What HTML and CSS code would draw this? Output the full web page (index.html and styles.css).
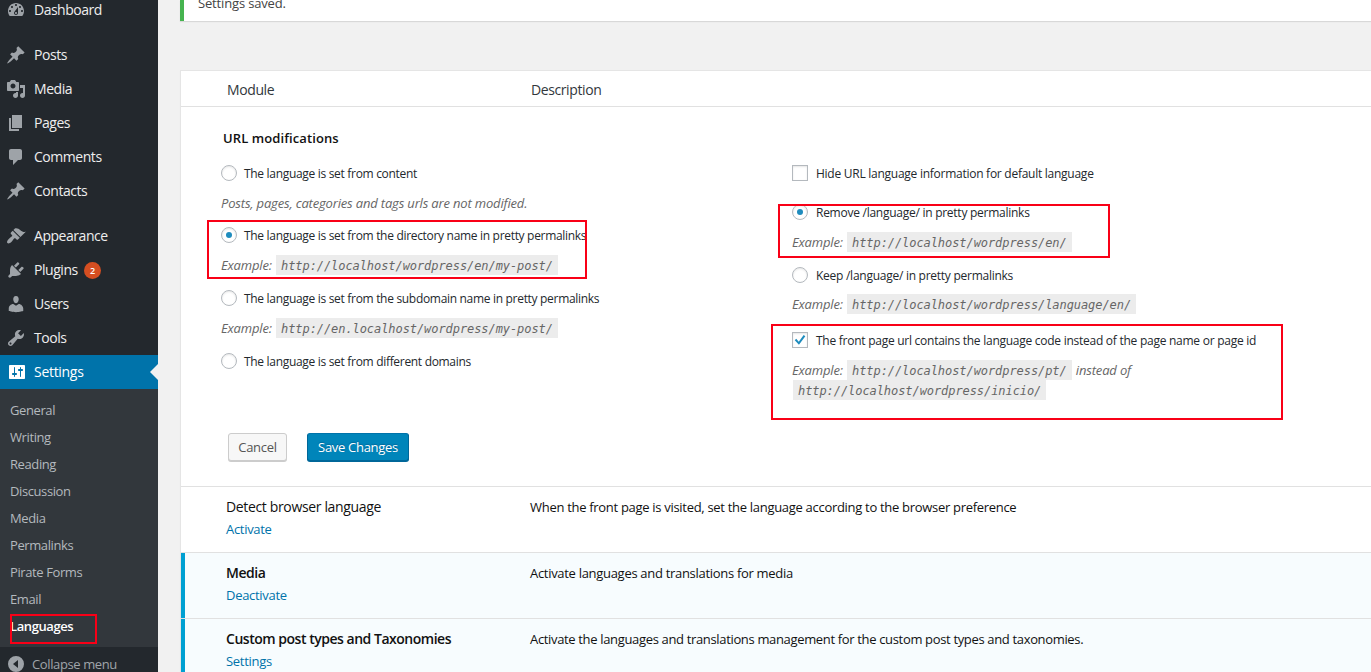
FILE: index.html
```html
<!DOCTYPE html>
<html lang="en">
<head>
<meta charset="utf-8">
<title>Languages settings</title>
<link rel="stylesheet" href="styles.css">
</head>
<body>
<div class="admin">
  <nav class="sidebar">
    <a class="item"><svg class="icon" viewBox="0 0 20 20"><path d="M3.760 16h12.480c1.100-1.370 1.760-3.110 1.760-5 0-4.420-3.580-8-8-8s-8 3.580-8 8c0 1.890.66 3.630 1.760 5zM10 4c.55 0 1 .45 1 1s-.45 1-1 1-1-.45-1-1 .45-1 1-1zM6 6c.55 0 1 .45 1 1s-.45 1-1 1-1-.45-1-1 .45-1 1-1zm8 0c.55 0 1 .45 1 1s-.45 1-1 1-1-.45-1-1 .45-1 1-1zm-5.370 5.550L12 7v6c0 1.100-.9 2-2 2s-2-.9-2-2c0-.57.24-1.080.63-1.450zM4 10c.55 0 1 .45 1 1s-.45 1-1 1-1-.45-1-1 .45-1 1-1zm12 0c.55 0 1 .45 1 1s-.45 1-1 1-1-.45-1-1 .45-1 1-1zm-5 3c0-.55-.45-1-1-1s-1 .45-1 1 .45 1 1 1 1-.45 1-1z" fill-rule="evenodd"/></svg><span class="wide">Dashboard</span></a>
    <a class="item gap"><svg class="icon" viewBox="0 0 20 20"><path d="M10.440 3.020l1.820-1.820 6.360 6.350-1.830 1.820c-1.050-.68-2.480-.57-3.410.36l-.75.75c-.92.93-1.040 2.350-.35 3.410l-1.830 1.820-2.410-2.410-2.800 2.790c-.42.42-3.380 2.710-3.800 2.290s1.860-3.390 2.280-3.810l2.790-2.790L4.100 9.360l1.830-1.820c1.050.69 2.480.57 3.400-.36l.75-.75c.93-.92 1.050-2.350.36-3.410z"/></svg><span>Posts</span></a>
    <a class="item"><svg class="icon" viewBox="0 0 20 20"><path fill-rule="evenodd" d="M13 11V4c0-.55-.45-1-1-1h-1.670L9 1H5L3.670 3H2c-.55 0-1 .45-1 1v7c0 .55.45 1 1 1h10c.55 0 1-.45 1-1zM7 4.500c1.380 0 2.500 1.120 2.500 2.500S8.380 9.500 7 9.500 4.500 8.380 4.500 7 5.620 4.500 7 4.500zM14 6h5v10.500c0 1.380-1.120 2.500-2.500 2.500S14 17.880 14 16.500s1.120-2.500 2.500-2.500c.17 0 .34.02.5.05V9h-3V6zm-4 8.050V13h2v3.500c0 1.380-1.120 2.500-2.500 2.500S7 17.880 7 16.500 8.120 14 9.500 14c.17 0 .34.02.5.05z"/></svg><span>Media</span></a>
    <a class="item"><svg class="icon" viewBox="0 0 20 20"><path d="M6 15V2h10v13H6zm-1 1h8v2H3V5h2v11z"/></svg><span>Pages</span></a>
    <a class="item"><svg class="icon" viewBox="0 0 20 20"><path d="M5 2h9c1.100 0 2 .9 2 2v7c0 1.100-.9 2-2 2h-2l-5 5v-5H5c-1.100 0-2-.9-2-2V4c0-1.100.9-2 2-2z"/></svg><span>Comments</span></a>
    <a class="item"><svg class="icon" viewBox="0 0 20 20"><path d="M10.440 3.020l1.820-1.820 6.360 6.350-1.830 1.820c-1.050-.68-2.480-.57-3.410.36l-.75.75c-.92.93-1.040 2.350-.35 3.410l-1.830 1.820-2.410-2.410-2.800 2.790c-.42.42-3.380 2.710-3.800 2.290s1.860-3.390 2.280-3.810l2.790-2.790L4.100 9.360l1.830-1.820c1.050.69 2.480.57 3.400-.36l.75-.75c.93-.92 1.050-2.350.36-3.410z"/></svg><span>Contacts</span></a>
    <a class="item gap"><svg class="icon" viewBox="0 0 20 20"><path d="M14.480 11.060L7.410 3.990l1.500-1.500c.5-.56 2.300-.47 3.510.32 1.210.8 1.430 1.280 2.910 2.100 1.180.64 2.450 1.260 4.450.85zm-.71.71L6.700 4.700 4.930 6.470c-.39.39-.39 1.020 0 1.410l1.060 1.060c.39.39.39 1.030 0 1.420-.6.6-1.430 1.110-2.210 1.690-.35.26-.7.53-1.010.84C1.430 14.230.4 16.080 1.400 17.070c.99 1 2.840-.03 4.180-1.360.31-.31.58-.66.85-1.020.57-.78 1.080-1.610 1.690-2.210.39-.39 1.020-.39 1.410 0l1.060 1.060c.39.39 1.020.39 1.410 0z"/></svg><span>Appearance</span></a>
    <a class="item"><svg class="icon" viewBox="0 0 20 20"><path d="M13.110 4.360L9.870 7.600 8 5.730l3.240-3.240c.35-.34 1.050-.2 1.560.32.52.51.66 1.210.31 1.550zm-8 1.770l.91-1.120 9.010 9.010-1.190.84c-.71.71-2.630 1.160-3.820 1.160H6.140L4.900 17.260c-.59.59-1.540.59-2.120 0-.59-.58-.59-1.530 0-2.120l1.240-1.240v-3.880c0-1.130.4-3.190 1.090-3.890zm7.260 3.970l3.240-3.240c.34-.35 1.040-.21 1.550.31.52.51.66 1.210.31 1.550l-3.240 3.250z"/></svg><span>Plugins</span><b class="count">2</b></a>
    <a class="item"><svg class="icon" viewBox="0 0 20 20"><path d="M10 9.250c-2.270 0-2.730-3.440-2.730-3.440C7 4.020 7.820 2 9.970 2c2.160 0 2.980 2.020 2.710 3.810 0 0-.41 3.440-2.680 3.440zm0 2.570L12.720 10c2.390 0 4.520 2.330 4.520 4.530v2.490s-3.650 1.130-7.240 1.130c-3.650 0-7.240-1.130-7.240-1.130v-2.490c0-2.250 1.940-4.480 4.470-4.480z"/></svg><span>Users</span></a>
    <a class="item"><svg class="icon" viewBox="0 0 20 20"><path fill-rule="evenodd" d="M16.680 9.770c-1.340 1.340-3.300 1.670-4.950.99l-5.410 6.520c-.99.99-2.590.99-3.580 0s-.99-2.590 0-3.570l6.520-5.420c-.68-1.650-.35-3.610.99-4.950 1.280-1.280 3.120-1.620 4.720-1.060l-2.890 2.890 2.820 2.820 2.860-2.870c.53 1.580.18 3.390-1.080 4.650zM3.810 16.210c.4.39 1.040.39 1.430 0 .4-.4.4-1.040 0-1.430-.39-.4-1.030-.4-1.430 0-.39.39-.39 1.030 0 1.430z"/></svg><span>Tools</span></a>
    <a class="item current"><svg class="icon" viewBox="0 0 20 20"><path fill-rule="evenodd" d="M18 16V4c0-.55-.45-1-1-1H3c-.55 0-1 .45-1 1v12c0 .55.45 1 1 1h14c.55 0 1-.45 1-1zM8 11h1c.55 0 1 .45 1 1s-.45 1-1 1H8v1.500c0 .28-.22.5-.5.5s-.5-.22-.5-.5V13H6c-.55 0-1-.45-1-1s.45-1 1-1h1V5.500c0-.28.22-.5.5-.5s.5.22.5.5V11zm5-2h-1c-.55 0-1-.45-1-1s.45-1 1-1h1V5.500c0-.28.22-.5.5-.5s.5.22.5.5V7h1c.55 0 1 .45 1 1s-.45 1-1 1h-1v5.500c0 .28-.22.5-.5.5s-.5-.22-.5-.5V9z"/></svg><span>Settings</span></a>
    <div class="submenu">
      <a>General</a><a>Writing</a><a>Reading</a><a>Discussion</a><a>Media</a><a>Permalinks</a><a>Pirate Forms</a><a>Email</a><a class="active">Languages</a>
    </div>
    <a class="collapse"><svg class="icon" viewBox="0 0 20 20"><path fill-rule="evenodd" d="M10 2a8 8 0 1 1 0 16 8 8 0 0 1 0-16zM12 6v8l-5-4z"/></svg><span>Collapse menu</span></a>
  </nav>

  <main class="content">
    <div class="notice">Settings saved.</div>
    <section class="table">
      <header class="head"><span>Module</span><span>Description</span></header>
      <div class="panel">
        <h4>URL modifications</h4>
        <div class="columns">
          <div class="col">
            <label class="opt"><i class="radio"></i>The language is set from content</label>
            <p class="desc posts">Posts, pages, categories and tags urls are not modified.</p>
            <label class="opt"><i class="radio on"></i>The language is set from the directory name in pretty permalinks</label>
            <p class="desc">Example: <code>http://localhost/wordpress/en/my-post/</code></p>
            <label class="opt"><i class="radio"></i>The language is set from the subdomain name in pretty permalinks</label>
            <p class="desc">Example: <code>http://en.localhost/wordpress/my-post/</code></p>
            <label class="opt"><i class="radio"></i>The language is set from different domains</label>
          </div>
          <div class="col right">
            <label class="opt hide"><i class="check"></i>Hide URL language information for default language</label>
            <label class="opt"><i class="radio on"></i>Remove /language/ in pretty permalinks</label>
            <p class="desc">Example: <code>http://localhost/wordpress/en/</code></p>
            <label class="opt"><i class="radio"></i>Keep /language/ in pretty permalinks</label>
            <p class="desc last">Example: <code>http://localhost/wordpress/language/en/</code></p>
            <label class="opt"><i class="check"><svg viewBox="0 0 16 16"><path d="M3.700 6.700l2.900 3.300 5.600-7.600 1.900 1.300-7.300 9.800L2 8.300z"/></svg></i>The front page url contains the language code instead of the page name or page id</label>
            <p class="desc">Example: <code>http://localhost/wordpress/pt/</code> instead of<br><code class="first">http://localhost/wordpress/inicio/</code></p>
          </div>
        </div>
        <div class="actions"><button class="btn">Cancel</button><button class="btn primary">Save Changes</button></div>
      </div>
      <div class="row"><div><strong>Detect browser language</strong><a>Activate</a></div><p>When the front page is visited, set the language according to the browser preference</p></div>
      <div class="row enabled"><div><strong>Media</strong><a>Deactivate</a></div><p>Activate languages and translations for media</p></div>
      <div class="row enabled"><div><strong>Custom post types and Taxonomies</strong><a>Settings</a></div><p class="long">Activate the languages and translations management for the custom post types and taxonomies.</p></div>
    </section>
  </main>
  <div class="mark mark-directory"></div>
  <div class="mark mark-remove"></div>
  <div class="mark mark-front"></div>
  <div class="mark mark-languages"></div>
</div>
</body>
</html>
```

FILE: styles.css
```css
* { box-sizing: border-box; }
body { margin: 0; background: #f1f1f1; font: 13px/20px "Open Sans", "Noto Sans", sans-serif; color: #444; }
p, h4 { margin: 0; }
.admin { position: relative; display: flex; width: 1371px; height: 672px; overflow: hidden; }

/* Sidebar */
.sidebar { flex: 0 0 158px; background: #23282d; margin-top: -7px; }
.item, .collapse { position: relative; display: flex; align-items: center; height: 34px; padding-left: 6px; gap: 8px; font-size: 14px; letter-spacing: -.46px; color: #eee; }
.item .wide { letter-spacing: -.5px; }
.gap { margin-top: 11px; }
.icon { width: 20px; height: 20px; fill: #9ea3a8; flex: none; }
.current { background: #0073aa; color: #fff; letter-spacing: -.3px; }
.current .icon { fill: #fff; margin: 0 -1px 0 1px; }
.current::after { content: ""; position: absolute; right: 0; top: 9px; border: 8px solid transparent; border-left: 0; border-right-color: #f1f1f1; }
.count { width: 17px; height: 17px; margin-left: -2px; border-radius: 50%; background: #d54e21; color: #fff; font-size: 9px; line-height: 17px; font-weight: 600; text-align: center; }
.submenu { height: 258px; padding: 8px 0 0 10px; background: #32373c; }
.submenu a { display: block; height: 27px; line-height: 27px; color: #b4b9be; letter-spacing: -.4px; }
.submenu .active { color: #fff; font-weight: 600; }
.collapse { font-size: 13px; gap: 6px; color: #a0a5aa; letter-spacing: -.38px; }

/* Content */
.content { flex: 1; padding-left: 22px; }
.notice { height: 21px; padding-left: 14px; border-left: 4px solid #46b450; background: #fff; box-shadow: 0 1px 1px rgba(0,0,0,.1); line-height: 7px; letter-spacing: -.16px; }
.table { margin-top: 49px; border: 1px solid #e5e5e5; border-right: 0; background: #fff; box-shadow: 0 1px 1px rgba(0,0,0,.04); }
.head { display: grid; grid-template-columns: 304px 1fr; height: 36px; padding-left: 46px; border-bottom: 1px solid #e1e1e1; font-size: 14px; line-height: 37px; letter-spacing: -.4px; color: #32373c; }
.panel { height: 379px; padding: 21px 0 0 40px; }
h4 { padding-left: 2px; font-size: 13px; line-height: 20px; font-weight: 600; letter-spacing: .1px; color: #111; }
.columns { display: grid; grid-template-columns: 571px 1fr; margin-top: 15px; height: 260px; }
.opt { display: flex; align-items: center; gap: 7px; height: 20px; padding-top: 2px; font-size: 12px; letter-spacing: -.31px; color: #23282d; }
.right .opt { gap: 8px; letter-spacing: -.26px; }
.desc { margin: 10px 0 13px; font-style: italic; color: #666; letter-spacing: -.17px; }
.desc.posts { margin-bottom: 12px; }
.opt.hide { margin-bottom: 19px; }
.desc.last { margin: 9px 0 16px; }
.radio, .check { flex: none; width: 16px; height: 16px; margin-bottom: 2px; border: 1px solid #b4b9be; background: #fff; box-shadow: inset 0 1px 2px rgba(0,0,0,.1); }
.radio { display: grid; place-items: center; border-radius: 50%; }
.radio.on::before { content: ""; width: 6px; height: 6px; border-radius: 50%; background: #1e8cbe; }
.check svg { display: block; width: 14px; height: 14px; fill: #1e8cbe; }
code { display: inline-block; height: 20px; padding: 0 5px; margin: 0 1px; background: #ececec; font: italic 12px/22px "DejaVu Sans Mono", monospace; letter-spacing: -.07px; vertical-align: top; }
.actions { display: flex; gap: 20px; margin: 10px 0 0 7px; }
.btn { height: 28px; margin: 0; padding: 0; width: 59px; border: 1px solid #ccc; border-radius: 3px; background: #f7f7f7; box-shadow: 0 1px 0 #ccc; font: 13px/26px "Open Sans", sans-serif; letter-spacing: -.3px; color: #555; }
.btn.primary { width: 102px; border-color: #0073aa #006799 #006799; background: #0085ba; box-shadow: 0 1px 0 #006799; color: #fff; text-shadow: 0 -1px 1px #006799; }
.row { display: grid; grid-template-columns: 304px 1fr; height: 66px; padding: 9px 0 0 45px; border-top: 1px solid #e1e1e1; line-height: 22px; letter-spacing: -.3px; color: #111; }
.row strong, .row a { display: block; }
.row strong { font-weight: 400; font-size: 14px; letter-spacing: -.35px; }
.row a { color: #0073aa; }
.row .long { letter-spacing: -.34px; }
.enabled { position: relative; background: #f7fcfe; }
.enabled::before { content: ""; position: absolute; left: 0; top: 0; bottom: -1px; width: 4px; background: #00a0d2; }
.enabled strong { font-weight: 600; letter-spacing: -.48px; }

/* Highlight frames */
.mark { position: absolute; border: 2px solid #f90017; }
.mark-directory { left: 207px; top: 220px; width: 380px; height: 59px; }
.mark-remove { left: 778px; top: 204px; width: 332px; height: 54px; }
.mark-front { left: 771px; top: 324px; width: 512px; height: 96px; }
.mark-languages { left: 10px; top: 614px; width: 87px; height: 30px; }
```
